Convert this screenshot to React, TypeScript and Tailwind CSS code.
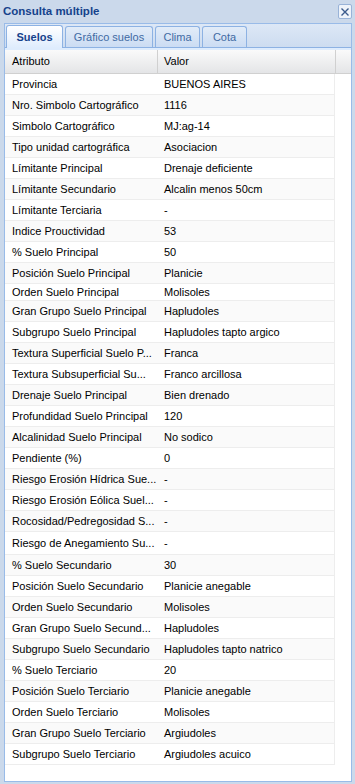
import React from 'react';

type Row = { attr: string; value: string };

const ROWS: Row[] = [
  { attr: 'Provincia', value: 'BUENOS AIRES' },
  { attr: 'Nro. Simbolo Cartográfico', value: '1116' },
  { attr: 'Simbolo Cartográfico', value: 'MJ:ag-14' },
  { attr: 'Tipo unidad cartográfica', value: 'Asociacion' },
  { attr: 'Límitante Principal', value: 'Drenaje deficiente' },
  { attr: 'Límitante Secundario', value: 'Alcalin menos 50cm' },
  { attr: 'Límitante Terciaria', value: '-' },
  { attr: 'Indice Prouctividad', value: '53' },
  { attr: '% Suelo Principal', value: '50' },
  { attr: 'Posición Suelo Principal', value: 'Planicie' },
  { attr: 'Orden Suelo Principal', value: 'Molisoles' },
  { attr: 'Gran Grupo Suelo Principal', value: 'Hapludoles' },
  { attr: 'Subgrupo Suelo Principal', value: 'Hapludoles tapto argico' },
  { attr: 'Textura Superficial Suelo P...', value: 'Franca' },
  { attr: 'Textura Subsuperficial Su...', value: 'Franco arcillosa' },
  { attr: 'Drenaje Suelo Principal', value: 'Bien drenado' },
  { attr: 'Profundidad Suelo Principal', value: '120' },
  { attr: 'Alcalinidad Suelo Principal', value: 'No sodico' },
  { attr: 'Pendiente (%)', value: '0' },
  { attr: 'Riesgo Erosión Hídrica Sue...', value: '-' },
  { attr: 'Riesgo Erosión Eólica Suel...', value: '-' },
  { attr: 'Rocosidad/Pedregosidad S...', value: '-' },
  { attr: 'Riesgo de Anegamiento Su...', value: '-' },
  { attr: '% Suelo Secundario', value: '30' },
  { attr: 'Posición Suelo Secundario', value: 'Planicie anegable' },
  { attr: 'Orden Suelo Secundario', value: 'Molisoles' },
  { attr: 'Gran Grupo Suelo Secund...', value: 'Hapludoles' },
  { attr: 'Subgrupo Suelo Secundario', value: 'Hapludoles tapto natrico' },
  { attr: '% Suelo Terciario', value: '20' },
  { attr: 'Posición Suelo Terciario', value: 'Planicie anegable' },
  { attr: 'Orden Suelo Terciario', value: 'Molisoles' },
  { attr: 'Gran Grupo Suelo Terciario', value: 'Argiudoles' },
  { attr: 'Subgrupo Suelo Terciario', value: 'Argiudoles acuico' },
];

const TABS = [
  { label: 'Suelos', width: 'w-[57px]', active: true },
  { label: 'Gráfico suelos', width: 'w-[88px]', active: false },
  { label: 'Clima', width: 'w-[45px]', active: false },
  { label: 'Cota', width: 'w-[45px]', active: false },
];

function CloseButton() {
  return (
    <div className="w-[14px] h-[15px] border border-[#99b3d8] bg-[#eef3fa] rounded-[2px] flex items-center justify-center">
      <svg width="10" height="10" viewBox="0 0 10 10">
        <path d="M1.5 1.5 L8.5 8.5 M8.5 1.5 L1.5 8.5" stroke="#3a5a8c" strokeWidth="1.4" />
      </svg>
    </div>
  );
}

export default function App() {
  return (
    <div className="w-[355px] h-[784px] bg-[#cbd9eb] flex flex-col font-['Liberation_Sans',Arial,sans-serif] text-[11px] text-black overflow-hidden">
      {/* Window header */}
      <div className="h-[23px] flex items-start justify-between pl-[3px] pr-[3px]">
        <span className="mt-[5px] text-[11.5px] leading-[13px] font-bold text-[#15428b]">Consulta múltiple</span>
        <div className="mt-[4px]">
          <CloseButton />
        </div>
      </div>

      {/* Panel */}
      <div className="flex-1 ml-[4px] mr-[3px] mb-[2px] border border-[#99bbe8] bg-white flex flex-col">
        {/* Tab strip */}
        <div className="h-[24px] bg-gradient-to-b from-[#dde8f6] to-[#cddcf0] flex items-end gap-[2px] pl-[1px] border-b border-[#8db2e3]">
          {TABS.map((tab) =>
            tab.active ? (
              <div
                key={tab.label}
                className={`${tab.width} h-[23px] -mb-[1px] rounded-t-[3px] border border-b-0 border-[#8db2e3] bg-gradient-to-b from-white to-[#deecfd] flex items-center justify-center font-bold text-[#15428b]`}
              >
                {tab.label}
              </div>
            ) : (
              <div
                key={tab.label}
                className={`${tab.width} h-[21px] rounded-t-[3px] border border-b-0 border-[#8db2e3] bg-gradient-to-b from-[#e2ecf8] to-[#cbdcf3] flex items-center justify-center text-[#416aa3]`}
              >
                {tab.label}
              </div>
            )
          )}
        </div>
        <div className="h-[2px] bg-[#deecfd]" />

        {/* Grid header */}
        <div className="h-[24px] flex bg-gradient-to-b from-[#fafafa] to-[#e4e5e7] border-b border-[#d0d0d0]">
          <div className="w-[153px] flex items-center pl-[7px] border-r border-[#d0d0d0]">Atributo</div>
          <div className="w-[178px] flex items-center pl-[6px] border-r border-[#d0d0d0]">Valor</div>
          <div className="flex-1" />
        </div>

        {/* Grid body */}
        <div className="flex-1 flex">
          <div className="w-[330px] flex flex-col">
            {ROWS.map((row, i) => (
              <div
                key={row.attr}
                className={`flex items-center border-b border-r border-[#ededed] ${
                  i === 10 ? 'h-[17px]' : i === 22 ? 'h-[23px]' : 'h-[21px]'
                } ${i % 2 === 1 ? 'bg-[#fafafa]' : 'bg-white'}`}
              >
                <div className="w-[153px] pl-[7px] whitespace-nowrap overflow-hidden">{row.attr}</div>
                <div className="flex-1 pl-[6px] whitespace-nowrap overflow-hidden">{row.value}</div>
              </div>
            ))}
          </div>
          <div className="flex-1" />
        </div>
      </div>
    </div>
  );
}
